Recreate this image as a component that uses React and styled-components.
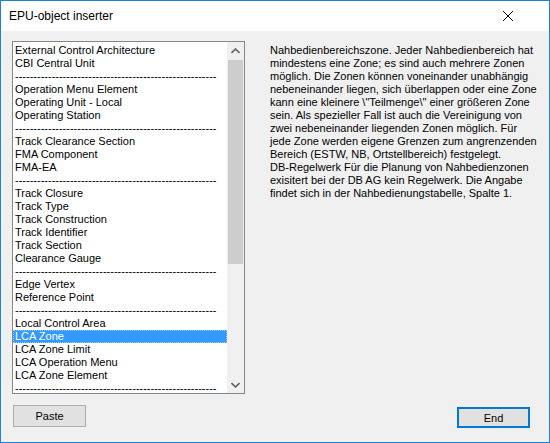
import React from 'react'
import styled, { createGlobalStyle } from 'styled-components'

const GlobalStyle = createGlobalStyle`
  html, body {
    margin: 0;
    padding: 0;
    background: #f0f0f0;
  }
`

const dashes = '-'.repeat(55)

const items = [
  'External Control Architecture',
  'CBI Central Unit',
  dashes,
  'Operation Menu Element',
  'Operating Unit - Local',
  'Operating Station',
  dashes,
  'Track Clearance Section',
  'FMA Component',
  'FMA-EA',
  dashes,
  'Track Closure',
  'Track Type',
  'Track Construction',
  'Track Identifier',
  'Track Section',
  'Clearance Gauge',
  dashes,
  'Edge Vertex',
  'Reference Point',
  dashes,
  'Local Control Area',
  'LCA Zone',
  'LCA Zone Limit',
  'LCA Operation Menu',
  'LCA Zone Element',
  dashes,
]

const description = [
  'Nahbedienbereichszone. Jeder Nahbedienbereich hat',
  'mindestens eine Zone; es sind auch mehrere Zonen',
  'möglich. Die Zonen können voneinander unabhängig',
  'nebeneinander liegen, sich überlappen oder eine Zone',
  'kann eine kleinere \\"Teilmenge\\" einer größeren Zone',
  'sein. Als spezieller Fall ist auch die Vereinigung von',
  'zwei nebeneinander liegenden Zonen möglich. Für',
  'jede Zone werden eigene Grenzen zum angrenzenden',
  'Bereich (ESTW, NB, Ortstellbereich) festgelegt.',
  'DB-Regelwerk Für die Planung von Nahbedienzonen',
  'exisitert bei der DB AG kein Regelwerk. Die Angabe',
  'findet sich in der Nahbedienungstabelle, Spalte 1.',
]

const App = () => {
  return (
    <>
      <GlobalStyle />
      <Window>
        <TitleBar>
          <Title>EPU-object inserter</Title>
          <CloseButton>
            <svg width="12" height="12" viewBox="0 0 12 12">
              <path d="M1 1 L11 11 M11 1 L1 11" stroke="#000" strokeWidth="1" fill="none" />
            </svg>
          </CloseButton>
        </TitleBar>
        <Body>
          <Content>
            <ListBox>
              <ListItems>
                {items.map((item, i) => (
                  <ListItem key={`item${i}`} selected={item === 'LCA Zone'}>
                    {item}
                  </ListItem>
                ))}
              </ListItems>
              <ScrollBar>
                <ScrollArrow>
                  <svg width="9" height="6" viewBox="0 0 9 6">
                    <path d="M0.5 5 L4.5 1 L8.5 5" stroke="#606060" strokeWidth="1.6" fill="none" />
                  </svg>
                </ScrollArrow>
                <ScrollTrack>
                  <ScrollThumb />
                </ScrollTrack>
                <ScrollArrow>
                  <svg width="9" height="6" viewBox="0 0 9 6">
                    <path d="M0.5 1 L4.5 5 L8.5 1" stroke="#606060" strokeWidth="1.6" fill="none" />
                  </svg>
                </ScrollArrow>
              </ScrollBar>
            </ListBox>
            <Description>
              {description.map((line, i) => (
                <DescriptionLine key={`line${i}`}>{line}</DescriptionLine>
              ))}
            </Description>
          </Content>
          <ButtonRow>
            <Button>Paste</Button>
            <Button primary>End</Button>
          </ButtonRow>
        </Body>
      </Window>
    </>
  )
}

export default App

const Window = styled.div`
  width: 550px;
  height: 443px;
  box-sizing: border-box;
  border: 1px solid #1883d7;
  background: #f0f0f0;
  display: flex;
  flex-direction: column;
  font-family: "Liberation Sans", Arial, sans-serif;
  font-size: 11px;
  color: #000;
`

const TitleBar = styled.div`
  height: 30px;
  background: #fff;
  display: flex;
  align-items: center;
  justify-content: space-between;
  padding-left: 8px;
`

const Title = styled.div`
  font-family: "Liberation Sans", Arial, sans-serif;
  font-size: 12px;
  padding-bottom: 1px;
`

const CloseButton = styled.div`
  width: 46px;
  height: 30px;
  margin-right: 18px;
  display: flex;
  align-items: center;
  justify-content: center;
`

const Body = styled.div`
  flex: 1;
  display: flex;
  flex-direction: column;
  padding: 10px 19px 14px 11px;
`

const Content = styled.div`
  display: flex;
  gap: 25px;
`

const ListBox = styled.div`
  flex: 0 0 233px;
  width: 233px;
  height: 353px;
  box-sizing: border-box;
  border: 1px solid #828790;
  background: #fff;
  display: flex;
  overflow: hidden;
`

const ListItems = styled.div`
  flex: 1;
  min-width: 0;
  padding-top: 2px;
  overflow: hidden;
`

const ListItem = styled.div`
  height: 13px;
  line-height: 13px;
  padding-left: 2px;
  white-space: nowrap;
  box-sizing: border-box;
  background: ${p => (p.selected ? '#3399ff' : 'transparent')};
  color: ${p => (p.selected ? '#fff' : '#000')};
  outline: ${p => (p.selected ? '1px dotted #a0c8f0' : 'none')};
  outline-offset: -1px;
`

const ScrollBar = styled.div`
  flex: 0 0 17px;
  background: #f0f0f0;
  display: flex;
  flex-direction: column;
`

const ScrollArrow = styled.div`
  height: 17px;
  display: flex;
  align-items: center;
  justify-content: center;
`

const ScrollTrack = styled.div`
  flex: 1;
  padding: 1px 1px 0;
`

const ScrollThumb = styled.div`
  height: 204px;
  background: #cdcdcd;
`

const Description = styled.div`
  flex: 1;
  min-width: 0;
  padding-top: 3px;
`

const DescriptionLine = styled.div`
  height: 13px;
  line-height: 13px;
  white-space: nowrap;
`

const ButtonRow = styled.div`
  margin-top: auto;
  display: flex;
  justify-content: space-between;
  align-items: flex-end;
  padding-left: 1px;
`

const Button = styled.button`
  width: 73px;
  height: ${p => (p.primary ? '21px' : '22px')};
  box-sizing: border-box;
  margin-bottom: ${p => (p.primary ? '0' : '1px')};
  background: #e1e1e1;
  border: ${p => (p.primary ? '2px solid #0078d7' : '1px solid #adadad')};
  font-family: "Liberation Sans", Arial, sans-serif;
  font-size: 11px;
  color: #000;
  padding: 0;
`
